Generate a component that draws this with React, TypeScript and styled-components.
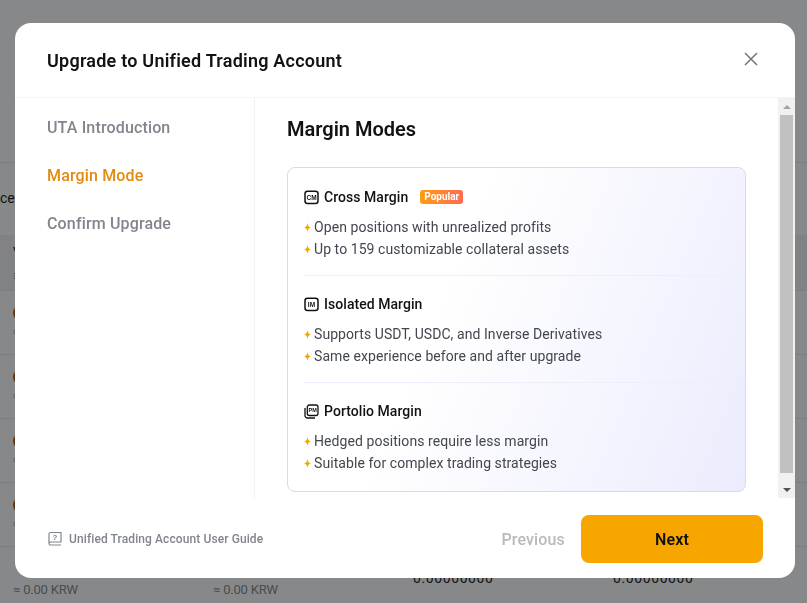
import React from "react";
import styled, { createGlobalStyle } from "styled-components";

const FONT = `Roboto, "Liberation Sans", sans-serif`;

const GlobalStyle = createGlobalStyle`
  html, body {
    margin: 0;
    height: 100%;
    overflow: hidden;
    background: #fff;
    font-family: ${FONT};
  }
  * { box-sizing: border-box; }
`;

/* page behind the dialog */
const Page = styled.div`
  height: 603px;
  overflow: hidden;
  color: #121214;
`;

const TopBand = styled.div`
  height: 163px;
  border-bottom: 1px solid #e8e9eb;
`;

const Summary = styled.div`
  height: 72px;
  padding-top: 27px;
  font-size: 14px;
`;

const TableHead = styled.div`
  height: 56px;
  padding: 7px 0 0 13px;
  background: #f3f3f4;
  border-bottom: 1px solid #e8e9eb;
  font-size: 13px;
  line-height: 20px;
`;

const TableRow = styled.div`
  height: 64px;
  border-bottom: 1px solid #e8e9eb;
  padding: 14px 0 0 13px;
`;

const Coin = styled.span`
  display: block;
  width: 16px;
  height: 16px;
  border-radius: 50%;
  background: #b35a12;
`;

const Sub = styled.div`
  margin-top: 4px;
  font-size: 12px;
  color: #81858c;
`;

const LastRow = styled.div`
  display: grid;
  grid-template-columns: repeat(4, 200px);
  padding: 35px 0 0 13px;
  font-size: 13px;
  letter-spacing: -0.2px;
  color: #81858c;
`;

const Amount = styled.div`
  margin-top: -12px;
  color: #121214;
  font-size: 14px;
  letter-spacing: 0.6px;
`;

const Overlay = styled.div`
  position: fixed;
  inset: 0;
  background: rgba(16, 17, 20, 0.5);
  padding: 23px 12px 25px 15px;
`;

const Modal = styled.div`
  height: 555px;
  display: flex;
  flex-direction: column;
  background: #fff;
  border-radius: 16px;
  overflow: hidden;
`;

const ModalHeader = styled.header`
  flex: none;
  height: 75px;
  display: flex;
  align-items: center;
  justify-content: space-between;
  padding: 0 36px 0 32px;
  border-bottom: 1px solid #f5f5f7;
`;

const Title = styled.h2`
  margin: 0;
  font-size: 18px;
  font-weight: 600;
  letter-spacing: 0.23px;
  color: #121214;
`;

const CloseButton = styled.button`
  display: flex;
  padding: 0 0 2px;
  border: 0;
  background: none;
  color: #71757a;
`;

const ModalBody = styled.div`
  flex: none;
  height: 400px;
  display: flex;
`;

const Sidebar = styled.nav`
  flex: none;
  width: 240px;
  padding: 18px 32px 0;
  display: flex;
  flex-direction: column;
  gap: 24px;
  border-right: 1px solid #f2f3f5;
`;

const NavItem = styled.div<{ $active?: boolean }>`
  height: 24px;
  line-height: 24px;
  font-size: 16px;
  font-weight: 500;
  letter-spacing: 0.15px;
  color: ${(p) => (p.$active ? "#e38b10" : "#81858c")};
`;

const Content = styled.section`
  flex: 1;
  padding: 18px 32px 0;
`;

const Heading = styled.h3`
  margin: 0 0 25px;
  height: 26px;
  line-height: 26px;
  font-size: 20px;
  font-weight: 600;
  color: #121214;
`;

const Card = styled.div`
  height: 325px;
  padding: 0 16px;
  border: 1px solid #d5d8f8;
  border-radius: 8px;
  background: linear-gradient(112deg, #ffffff 35%, #ebecfd 100%);
`;

const ModeBlock = styled.div`
  height: 107px;
  padding-top: 18px;
  border-bottom: 1px solid #eceef9;

  &:first-child {
    height: 108px;
    padding-top: 19px;
  }

  &:last-child {
    border-bottom: 0;
  }
`;

const ModeTitle = styled.div`
  height: 20px;
  display: flex;
  align-items: center;
  gap: 5px;
  font-size: 14px;
  font-weight: 500;
  letter-spacing: 0.05px;
  color: #121214;
`;

const Popular = styled.span`
  margin-left: 7px;
  width: 43px;
  height: 14px;
  text-align: center;
  line-height: 14px;
  border-radius: 3px;
  font-size: 10px;
  font-weight: 700;
  letter-spacing: 0;
  color: #fff;
  background: linear-gradient(90deg, #ff9d0f, #ff6b55);
`;

const Points = styled.ul`
  list-style: none;
  margin: 9px 0 0;
  padding: 0;
`;

const Point = styled.li`
  height: 22px;
  display: flex;
  align-items: center;
  gap: 3px;
  font-size: 14px;
  letter-spacing: 0.07px;
  color: #42474f;
`;

const ScrollTrack = styled.div`
  flex: none;
  width: 17px;
  display: flex;
  flex-direction: column;
  background: #f1f1f1;
`;

const ScrollArrow = styled.div<{ $down?: boolean }>`
  flex: none;
  height: 17px;
  display: flex;
  align-items: center;
  justify-content: center;

  &::before {
    content: "";
    border-left: 4px solid transparent;
    border-right: 4px solid transparent;
    ${(p) =>
      p.$down ? "border-top: 4px solid #505050;" : "border-bottom: 4px solid #a3a3a3;"}
  }
`;

const ScrollSpace = styled.div`
  flex: 1;
  padding: 0 2px;
`;

const ScrollThumb = styled.div`
  height: 358px;
  background: #c1c1c1;
`;

const ModalFooter = styled.footer`
  flex: 1;
  display: flex;
  align-items: center;
  justify-content: space-between;
  padding: 2px 32px 0;
`;

const GuideLink = styled.a`
  display: flex;
  align-items: center;
  gap: 6px;
  font-size: 12px;
  font-weight: 500;
  letter-spacing: 0.1px;
  color: #81858c;
`;

const FooterActions = styled.div`
  display: flex;
  align-items: center;
  gap: 16px;
`;

const PrevButton = styled.button`
  border: 0;
  padding: 0;
  background: none;
  font-family: inherit;
  font-size: 16px;
  font-weight: 500;
  letter-spacing: 0.15px;
  color: #b8babe;
`;

const NextButton = styled.button`
  width: 182px;
  height: 48px;
  border: 0;
  border-radius: 8px;
  background: #f7a600;
  font-family: inherit;
  font-size: 16px;
  font-weight: 600;
  letter-spacing: 0.2px;
  color: #121214;
`;

const Star = () => (
  <svg width="7" height="9" viewBox="0 0 7 9">
    <path d="M3.500 0C3.900 2.900 4.700 3.800 7 4.500C4.700 5.200 3.900 6.100 3.500 9C3.100 6.100 2.300 5.200 0 4.500C2.300 3.800 3.100 2.900 3.500 0Z" fill="#f7a600" />
  </svg>
);

const ModeIcon = ({ label, stacked }: { label: string; stacked?: boolean }) => (
  <svg width="15" height="15" viewBox="0 0 15 15" fill="none">
    {stacked ? (
      <>
        <path d="M1 4v7.500A2.500 2.500 0 0 0 3.500 14H11" stroke="#121214" strokeWidth="1.300" />
        <rect x="3.300" y="1" width="10.700" height="10.500" rx="2" stroke="#121214" strokeWidth="1.300" />
      </>
    ) : (
      <rect x="1" y="1.200" width="13" height="12.300" rx="2.500" stroke="#121214" strokeWidth="1.500" />
    )}
    <text
      x={stacked ? 8.650 : 7.500}
      y={stacked ? 8.300 : 9.700}
      textAnchor="middle"
      fontFamily="'Liberation Sans', sans-serif"
      fontWeight="700"
      fontSize={stacked ? 5.500 : 6.500}
      fill="#121214"
    >
      {label}
    </text>
  </svg>
);

const GuideIcon = () => (
  <svg width="16" height="16" viewBox="0 0 16 16" fill="none" stroke="#81858c" strokeWidth="1.200">
    <path d="M2 12.500V3a1.500 1.500 0 0 1 1.500-1.500H14V11H3.500A1.500 1.500 0 0 0 2 12.500Zm0 0A1.500 1.500 0 0 0 3.500 14H14" />
    <text x="8" y="9" textAnchor="middle" fontFamily="'Liberation Sans', sans-serif" fontSize="8" fontWeight="700" fill="#81858c" stroke="none">
      ?
    </text>
  </svg>
);

const CloseIcon = () => (
  <svg width="16" height="16" viewBox="0 0 16 16" fill="none" stroke="currentColor" strokeWidth="1.500">
    <path d="M2 2L14 14M14 2L2 14" />
  </svg>
);

const modes = [
  {
    icon: "CM",
    title: "Cross Margin",
    popular: true,
    points: ["Open positions with unrealized profits", "Up to 159 customizable collateral assets"],
  },
  {
    icon: "IM",
    title: "Isolated Margin",
    points: ["Supports USDT, USDC, and Inverse Derivatives", "Same experience before and after upgrade"],
  },
  {
    icon: "PM",
    title: "Portolio Margin",
    stacked: true,
    points: ["Hedged positions require less margin", "Suitable for complex trading strategies"],
  },
];

const App: React.FC = () => (
  <>
    <GlobalStyle />
    <Page>
      <TopBand />
      <Summary>ce:</Summary>
      <TableHead>
        V
        <Sub>≡</Sub>
      </TableHead>
      {[0, 1, 2, 3].map((i) => (
        <TableRow key={i}>
          <Coin />
          <Sub>≈</Sub>
        </TableRow>
      ))}
      <LastRow>
        <div>≈ 0.00 KRW</div>
        <div>≈ 0.00 KRW</div>
        <Amount>0.00000000</Amount>
        <Amount>0.00000000</Amount>
      </LastRow>
    </Page>
    <Overlay>
      <Modal>
        <ModalHeader>
          <Title>Upgrade to Unified Trading Account</Title>
          <CloseButton aria-label="Close">
            <CloseIcon />
          </CloseButton>
        </ModalHeader>
        <ModalBody>
          <Sidebar>
            <NavItem>UTA Introduction</NavItem>
            <NavItem $active>Margin Mode</NavItem>
            <NavItem>Confirm Upgrade</NavItem>
          </Sidebar>
          <Content>
            <Heading>Margin Modes</Heading>
            <Card>
              {modes.map((m) => (
                <ModeBlock key={m.title}>
                  <ModeTitle>
                    <ModeIcon label={m.icon} stacked={m.stacked} />
                    {m.title}
                    {m.popular && <Popular>Popular</Popular>}
                  </ModeTitle>
                  <Points>
                    {m.points.map((p) => (
                      <Point key={p}>
                        <Star />
                        {p}
                      </Point>
                    ))}
                  </Points>
                </ModeBlock>
              ))}
            </Card>
          </Content>
          <ScrollTrack>
            <ScrollArrow />
            <ScrollSpace>
              <ScrollThumb />
            </ScrollSpace>
            <ScrollArrow $down />
          </ScrollTrack>
        </ModalBody>
        <ModalFooter>
          <GuideLink>
            <GuideIcon />
            Unified Trading Account User Guide
          </GuideLink>
          <FooterActions>
            <PrevButton>Previous</PrevButton>
            <NextButton>Next</NextButton>
          </FooterActions>
        </ModalFooter>
      </Modal>
    </Overlay>
  </>
);

export default App;
